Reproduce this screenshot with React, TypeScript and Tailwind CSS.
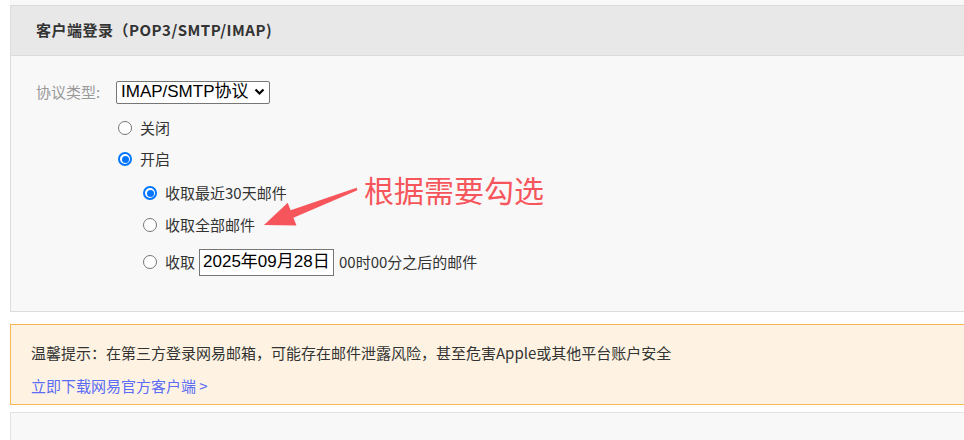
const cjk = { fontFamily: '"Microsoft YaHei", "Noto Sans CJK SC", "Liberation Sans", sans-serif' };
const arial = { fontFamily: '"Liberation Sans", "Noto Sans CJK SC", sans-serif' };

function Radio({ checked = false }: { checked?: boolean }) {
  if (checked) {
    return (
      <span className="w-[14px] h-[14px] rounded-full border-2 border-[#0075ff] bg-white flex items-center justify-center shrink-0">
        <span className="w-[7px] h-[7px] rounded-full bg-[#0075ff]" />
      </span>
    );
  }
  return <span className="w-[14px] h-[14px] rounded-full border border-[#767676] bg-white shrink-0" />;
}

function Option({ checked, indent, children }: { checked?: boolean; indent: string; children: React.ReactNode }) {
  return (
    <div className={`flex items-center h-[30px] gap-[8px] ${indent}`}>
      <Radio checked={checked} />
      <div className="flex items-center text-[15px] text-[#333]">{children}</div>
    </div>
  );
}

export default function App() {
  return (
    <div className="relative w-full h-[440px] overflow-hidden bg-white" style={cjk}>
      <div className="h-[5px] ml-[10px] bg-[#f8f8f8]" />

      <div className="ml-[10px] -mr-[10px] border border-[#dcdcdc]">
        <div className="h-[50px] bg-[#e8e8e8] border-b border-[#dcdcdc] flex items-center pl-[25px] text-[15px] font-bold text-[#333] tracking-[0.5px]">
          客户端登录（POP3/SMTP/IMAP)
        </div>
        <div className="bg-[#f8f8f8] pl-[25px] pt-[21px] pb-[34px]">
          <div className="flex items-center h-[30px]">
            <span className="w-[80px] text-[15px] text-[#999]">协议类型:</span>
            <div
              className="h-[23px] w-[154px] border border-[#767676] rounded-[2px] bg-white flex items-center justify-between pl-[4px] pr-[4px] text-[17px] text-black"
              style={arial}
            >
              <span>IMAP/SMTP协议</span>
              <svg width="11" height="8" viewBox="0 0 11 8">
                <path d="M1.5 1.5 L5.5 5.5 L9.5 1.5" fill="none" stroke="#000" strokeWidth="2.2" />
              </svg>
            </div>
          </div>

          <div className="mt-[6px]">
            <Option indent="ml-[82px]">关闭</Option>
          </div>
          <div className="mt-[1px]">
            <Option checked indent="ml-[82px]">开启</Option>
          </div>
          <div className="mt-[4px]">
            <Option checked indent="ml-[107px]">收取最近30天邮件</Option>
          </div>
          <div className="mt-[2px]">
            <Option indent="ml-[107px]">收取全部邮件</Option>
          </div>
          <div className="mt-[7px]">
            <Option indent="ml-[107px]">
              <span>收取</span>
              <span
                className="ml-[4px] h-[27px] w-[135px] border border-[#767676] bg-white flex items-center pl-[3px] text-[17px] text-black"
                style={arial}
              >
                2025年09月28日
              </span>
              <span className="ml-[5px]">00时00分之后的邮件</span>
            </Option>
          </div>
        </div>
      </div>

      <div className="ml-[10px] -mr-[10px] mt-[12px] h-[81px] border border-[#f8b551] bg-[#fef3e2] pl-[20px] pt-[17px] flex flex-col gap-[12px]">
        <div className="text-[15px] text-[#333] leading-[21px]">
          温馨提示：在第三方登录网易邮箱，可能存在邮件泄露风险，甚至危害Apple或其他平台账户安全
        </div>
        <div className="text-[15px] text-[#5b6cf6] leading-[21px]">立即下载网易官方客户端&nbsp;&gt;</div>
      </div>

      <div className="ml-[10px] -mr-[10px] mt-[7px] h-[60px] border border-[#e2e2e2] bg-[#f8f8f8]" />

      <svg className="absolute left-0 top-0 pointer-events-none" width="964" height="440">
        <polygon
          points="264,225 296.5,225.5 293.4,217.7 357.4,190.2 356.6,187.8 290.6,210.3 287.7,202.8"
          fill="#f6565b"
        />
      </svg>
      <div className="absolute left-[364px] top-[170px] text-[30px] leading-[38px] text-[#f6565b]">根据需要勾选</div>
    </div>
  );
}
